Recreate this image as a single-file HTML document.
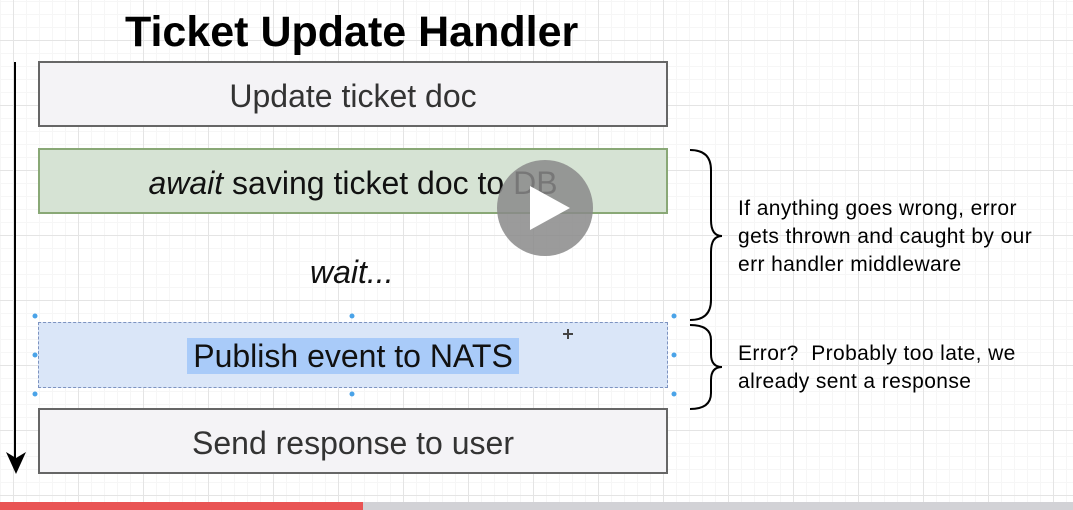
<!DOCTYPE html>
<html><head><style>
body{margin:0;width:1073px;height:510px;overflow:hidden;background:#fff;font-family:"Liberation Sans",Arial,sans-serif;position:relative}
.grid{position:absolute;left:0;top:0;width:1073px;height:502px;
background-image:linear-gradient(#e4e4e4 1px,transparent 1px),linear-gradient(90deg,#e4e4e4 1px,transparent 1px),linear-gradient(#f6f6f6 1px,transparent 1px),linear-gradient(90deg,#f6f6f6 1px,transparent 1px);
background-size:65px 65px,65px 65px,13px 13px,13px 13px;background-position:0 40px,13px 0,0 1px,0 0}
.box{position:absolute;left:38px;width:630px;box-sizing:border-box;display:flex;align-items:center;justify-content:center;font-size:32px;color:#333;padding-top:5px}
.t{position:absolute;font-size:21px;color:#000;line-height:28px;letter-spacing:0.4px}
</style></head><body>
<div class="grid"></div>
<div style="position:absolute;left:125px;top:8px;font-size:43px;font-weight:bold;color:#000">Ticket Update Handler</div>
<div style="position:absolute;left:14px;top:62px;width:2px;height:398px;background:#000"></div>
<svg style="position:absolute;left:5px;top:450px" width="22" height="25"><path d="M1 2 L11 24 L21 2 L11 8 Z" fill="#000"/></svg>
<div class="box" style="top:61px;height:66px;background:#f4f3f6;border:2px solid #666">Update ticket doc</div>
<div class="box" style="top:148px;height:66px;background:#d6e3d4;border:2px solid #89a876;color:#111"><i>await</i>&nbsp;saving ticket doc to DB</div>
<div style="position:absolute;left:310px;top:254px;font-size:32px;font-style:italic;color:#111">wait...</div>
<div class="box" style="top:322px;height:66px;background:#dae6f8;border:1px dashed #7d93c0;color:#111;padding-top:2px"><span style="background:#a9cbf9;padding:0 6px;line-height:36px">Publish event to NATS</span></div>
<div class="box" style="top:408px;height:66px;background:#f4f3f6;border:2px solid #666">Send response to user</div>
<svg style="position:absolute;left:0;top:0" width="1073" height="510">
<g fill="#4aa3e8">
<circle cx="35" cy="316" r="2.5"/><circle cx="352" cy="316" r="2.5"/><circle cx="674" cy="316" r="2.5"/>
<circle cx="35" cy="355" r="2.5"/><circle cx="674" cy="355" r="2.5"/>
<circle cx="35" cy="394" r="2.5"/><circle cx="352" cy="394" r="2.5"/><circle cx="674" cy="394" r="2.5"/>
</g>
<path d="M690 150 Q711 150 711 170 L711 220 Q711 236 722 236 Q711 236 711 252 L711 300 Q711 320 690 320" stroke="#000" stroke-width="2" fill="none"/>
<path d="M690 325 Q711 325 711 340 L711 354 Q711 367 722 367 Q711 367 711 380 L711 393 Q711 409 690 409" stroke="#000" stroke-width="2" fill="none"/>
<circle cx="545" cy="208" r="48" fill="#8a8a8a" fill-opacity="0.85"/>
<path d="M530 186 L530 230 L570 208 Z" fill="#fff"/>
<path d="M568 329 V339 M563 334 H573" stroke="#444" stroke-width="2"/>
</svg>
<div class="t" style="left:738px;top:195px">If anything goes wrong, error<br>gets thrown and caught by our<br>err handler middleware</div>
<div class="t" style="left:738px;top:340px">Error?&nbsp; Probably too late, we<br>already sent a response</div>
<div style="position:absolute;left:0;top:502px;width:1073px;height:8px;background:#d2d2d6"></div>
<div style="position:absolute;left:0;top:502px;width:363px;height:8px;background:#e95454"></div>
</body></html>
